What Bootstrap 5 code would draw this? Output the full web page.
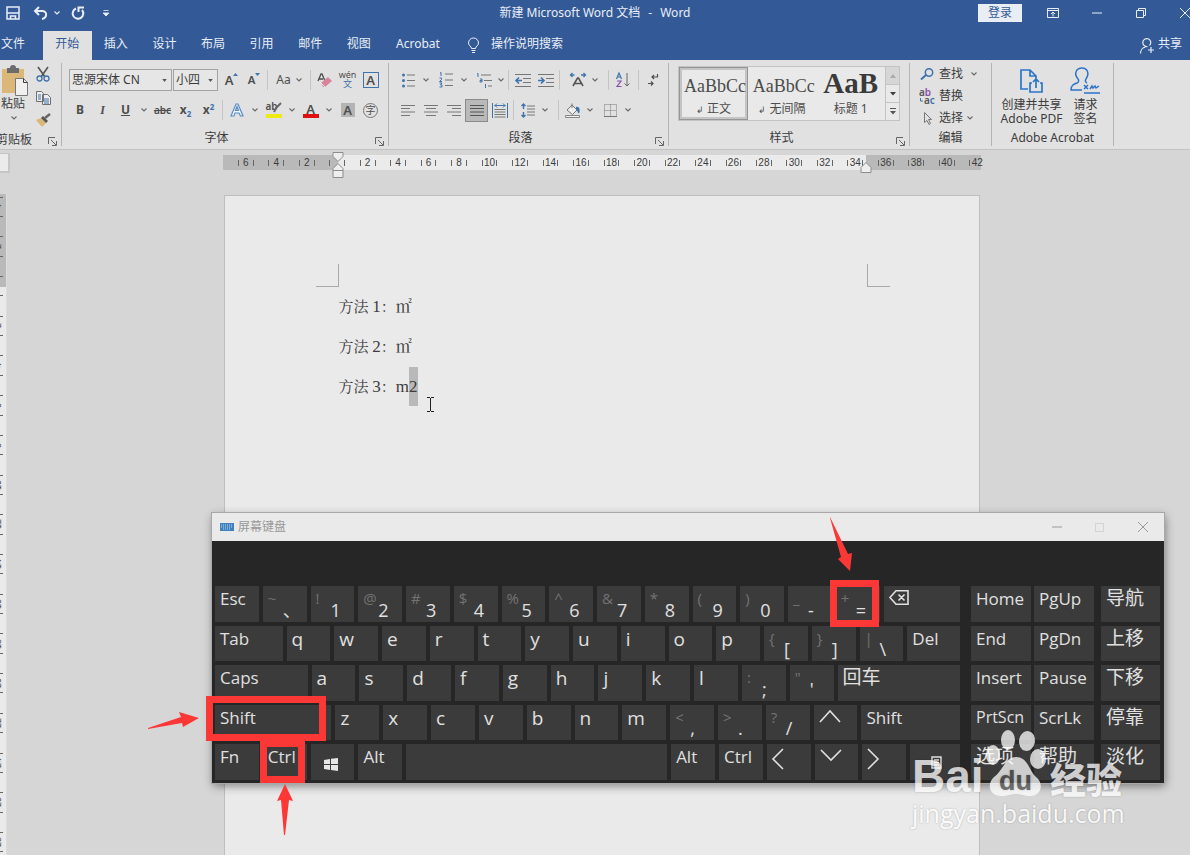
<!DOCTYPE html>
<html lang="zh-CN">
<head>
<meta charset="utf-8">
<meta name="viewport" content="width=device-width, initial-scale=1">
<title>新建 Microsoft Word 文档 - Word</title>
<link href="https://cdn.jsdelivr.net/npm/bootstrap@5.3.0/dist/css/bootstrap.min.css" rel="stylesheet">
<style>
:root{--blue:#335a96;--ribbon:#e1e1e1;--desk:#d6d6d6;--paper:#eaeaea;--ink:#3c3c3c;--accent:#3f73ac}
body{font-family:"Noto Sans","Noto Sans CJK SC",sans-serif;font-size:12px;line-height:16px;color:var(--ink);background:var(--desk)}
button{border:0;background:none;padding:0;color:inherit;font:inherit}
svg{display:block;flex:none;overflow:visible}
.ln{fill:none;stroke:currentColor}
/* title bar and tabs */
.top-band{background:var(--blue);color:#e9eef6;flex:none}
.title-row{display:grid;grid-template-columns:1fr auto 1fr;height:26px}
.qat{padding-left:6px}
.qat button,.win-btn{height:26px;display:flex;align-items:center;justify-content:center}
.q-s{width:14px;margin-right:6px}.q-m{width:28px}.q-c{width:6px}
.login{width:44px;height:18px;background:#e9edf4;color:var(--blue);margin-right:9px}
.win-btn{width:44px}
.win-btn.edge{width:27px;justify-content:flex-end}
.tab-row{height:34px;padding-top:5px}
.tab-row a{color:inherit;text-decoration:none;line-height:26px;height:29px;text-align:center}
.tab-file{width:43px;padding-right:17px}
.tab-set{width:340px}
.tab-set a{flex:1 1 0}
.tab-row a.on{background:var(--ribbon);color:var(--blue)}
.tab-acro{width:70px}
.tell{padding-left:15px}
/* ribbon */
.ribbon{background:var(--ribbon);height:90px;flex:none;border-bottom:1px solid #c2c2c2;overflow:hidden}
.grp{position:relative;display:flex;flex-direction:column;flex:none;margin:3px 0;border-right:1px solid #b4b4b4;height:83px}
.grp-name{margin-top:auto;text-align:center;line-height:16px;height:16px;white-space:nowrap}
.launch{position:absolute;right:4px;bottom:0}
.g-clip{width:62px}.g-font{width:327px;padding-left:7px}.g-para{width:280px;padding-left:8px}.g-style{width:241px;padding-left:9px}.g-edit{width:82px}.g-acro{width:122px}
.trow{display:flex;align-items:center;height:24px}
.trow:first-child{margin-top:5px}
.trow+.trow{margin-top:6px}
.t{display:flex;align-items:center;justify-content:center;flex:none;height:23px;width:23px;color:#4e4e4e}
.t.c{width:14px}.t.n{width:11px}.t.w{width:38px;gap:5px}.t.s{width:22px}
.t.sel{background:#b9b9b9;box-shadow:inset 0 0 0 1px #8b8b8b}
.dn{color:#6a6a6a}
.bar{width:1px;height:20px;background:#c4c4c4;margin:0 2px;flex:none}
.combo{height:22px;border:1px solid #a3a3a3;border-radius:0;background:#e6e6e6 url("data:image/svg+xml,%3Csvg xmlns='http://www.w3.org/2000/svg' viewBox='0 0 6 4'%3E%3Cpath d='M0 0h6L3 4z' fill='%23555'/%3E%3C/svg%3E") no-repeat right 4px center/5px 3px;appearance:none;padding:0 2px;color:var(--ink);font-size:12px;line-height:18px}
.combo.f1{width:103px}.combo.f2{width:45px;margin-left:1px;margin-right:2px}
.fs{font-size:13px;font-weight:600;line-height:16px}
.acc{color:var(--accent)}
.gallery{display:flex;margin-top:3px;height:55px;width:222px;border:1px solid #c3c3c3;background:#e9e9e9}
.sty{flex:1 1 0;overflow:hidden;min-width:0;text-align:center;padding:3px 5px 0;color:#4c4c4c}
.sty b,.sty i{display:block;font:normal 18px/26px "Liberation Serif",serif;height:28px;white-space:nowrap}
.sty b{font-weight:700;font-size:29px;line-height:20px;color:#3a3a3a}
.sty.on{box-shadow:inset 0 0 0 1px #969696,inset 0 0 0 3px #c4c4c4}
.sty span{display:block;line-height:16px}
.sty small{font-size:9px}
.gal-nav{width:14px;border-left:1px solid #c3c3c3}
.gal-nav button{flex:1;display:flex;align-items:center;justify-content:center;border-bottom:1px solid #c3c3c3}
.gal-nav button:last-child{border:0}
.gal-nav button:first-child{background:#d6d6d6;color:#aaa}
.erow{display:flex;align-items:center;height:22px;gap:4px;padding-left:10px}
.erow svg.ic{width:15px}
.big{text-align:center;line-height:14px}
/* workspace */
.work{position:relative;overflow:hidden;min-height:0;flex:1 1 0}
.v-col{width:7px;flex:none}
.tab-kind{width:10px;height:20px;margin-top:3px;background:#ebebeb;border:1px solid #c6c6c6;border-left:0;border-width:1px 2px 2px 0}
.v-rule{margin-top:21px;background:linear-gradient(#b9b9b9 93px,#eaeaea 93px);height:661px;overflow:hidden;border-right:1px solid #dcdcdc}
.v-cells{display:grid;grid-template-rows:repeat(17,1fr);height:675px;margin-top:-7px}
.v-cells div{position:relative;display:flex;align-items:center;font:9px/9px "Liberation Sans",sans-serif;background:linear-gradient(#666,#666) 0 25%/3px 1px no-repeat,linear-gradient(#666,#666) 0 75%/3px 1px no-repeat}
.v-cells span{writing-mode:vertical-rl;rotate:180deg;margin-left:-6px}
.canvas{padding-left:6px}
.sheet-col{width:758px;margin:0 auto}
.h-rule{margin-top:5px;height:15px;padding-left:8px;position:relative;background:linear-gradient(90deg,#b9b9b9 115px,#ebebeb 115px,#ebebeb 643px,#b9b9b9 643px)}
.h-cells{display:grid;grid-template-columns:repeat(25,1fr);width:762px}
.h-cells div{text-align:center;font:10px/15px "Liberation Sans",sans-serif;height:15px;background:linear-gradient(#666,#666) 25% 50%/1px 6px no-repeat,linear-gradient(#666,#666) 75% 50%/1px 6px no-repeat}
.h-cells div:last-child{background-size:1px 6px,0 0}
.mk{position:absolute;top:-3px}
.mk-l{left:109px}.mk-r{left:637px}
.sheet{margin:25px 1px 0 1px;background:var(--paper);border:1px solid #bebebe;border-bottom:0;height:680px;padding:68px 89px 0 91px}
.corner{width:23px;height:23px;border:solid #a9a9a9;border-width:0 1px 1px 0}
.corner.r{border-width:0 0 1px 1px}
.copy{padding-left:23px;font:15px/40px "Liberation Serif","Noto Serif CJK SC","Noto Sans CJK SC",serif}
.copy p{margin:0;height:40px}
.copy .num{font-size:17px}
.copy .unit{font-size:16px}
.copy .hit{background:#b9b9b9;display:inline-block;height:39px}
.beam{position:absolute;left:427px;top:247px}
/* on-screen keyboard */
.osk{position:absolute;left:212px;right:26px;top:363px;box-shadow:0 0 0 1px #a8a8a8,1px 3px 9px rgba(0,0,0,.45)}
.osk-bar{height:28px;background:var(--paper);color:#999;padding-left:8px}
.osk-bar button{width:43px;height:26px;display:flex;align-items:center;justify-content:center}
.osk-body{background:#262626;padding:45px 4px 3px 3px;display:flex}
.keys{display:grid;grid-auto-rows:1fr;gap:4px;height:194px}
.k-main{flex:745 1 0;margin-right:11px}.k-nav{flex:123 1 0;margin-right:7px}.k-side{flex:59 1 0}
.krow{display:flex;gap:4px;min-width:0}
.k-nav .krow{gap:3px}
.key{position:relative;min-width:0;background:#3b3b3b;color:#e0e0e0;text-align:left;font:17px/25px "Open Sans","Noto Sans CJK SC",sans-serif;padding:0 0 0 5px;display:flex;align-items:flex-start;white-space:nowrap}
.key.big-l{font-size:19px;line-height:26px}
.key.cj{font-size:19px}
.key.sm{font-size:16px}
.key sub,.key sup{position:absolute;line-height:20px;top:2px;left:5px;font-size:15px;color:#737373}
.key sub{top:auto;bottom:2px;left:20px;font-size:18px;color:#e0e0e0}
.key svg{margin:4px 0 0 0}
.notes{position:absolute;left:0;top:0;pointer-events:none}
/* watermark */
.wm{position:absolute;left:912px;top:577px;color:#fff;pointer-events:none;text-shadow:0 0 2px rgba(0,0,0,.3)}
.wm-top{display:flex;align-items:flex-end;height:69px;opacity:.75}
.wm-top b{font:700 46px/40px "Liberation Sans",sans-serif;width:68px}
.wm-top strong{font:900 36px/36px "Noto Sans CJK SC",sans-serif}
.wm-url{font:25px/30px "Open Sans",sans-serif;opacity:.85;margin-top:2px}
</style>
</head>
<body class="vh-100 overflow-hidden d-flex flex-column">
<svg width="0" height="0" class="position-absolute">
  <symbol id="dn" viewBox="0 0 6 4"><path d="M.5.5 3 3 5.500.5" fill="none" stroke="currentColor" stroke-width="1.100"/></symbol>
  <symbol id="tri" viewBox="0 0 6 4"><path d="M0 0h6L3 3.500z" fill="currentColor"/></symbol>
  <symbol id="ln" viewBox="0 0 9 9"><path d="M.5 7V.5H7M3 3l5 5M8.500 4v4.500H4" fill="none" stroke="#666"/></symbol>
</svg>

<header class="top-band">
  <div class="title-row">
    <div class="qat d-flex">
      <button class="q-s" aria-label="保存"><svg width="14" height="14" class="ln" stroke-width="1.500"><path d="M1 1h12v12H1zM1 7h12M4.500 13v-3h5v3"/></svg></button>
      <button class="q-m" aria-label="撤消"><svg width="15" height="14" class="ln" stroke-width="2"><path d="M6 1 2 5l4 4M2 5h7c6 0 5 7 0 8"/></svg></button>
      <button class="q-c" aria-label="撤消选项"><svg width="6" height="4"><use href="#dn"/></svg></button>
      <button class="q-m ms-1" aria-label="恢复"><svg width="14" height="14" class="ln" stroke-width="2"><path d="M5 2.500a5.300 5.300 0 1 0 6 1.500M7.500 6V1.500H13"/></svg></button>
      <button class="q-m" aria-label="自定义"><svg width="6" height="7"><path d="M.5.5h5M0 3h6L3 6z" fill="currentColor" stroke="currentColor" stroke-width=".8"/></svg></button>
    </div>
    <div class="d-flex align-items-center gap-2"><span>新建 Microsoft Word 文档</span><span>-</span><span>Word</span></div>
    <div class="d-flex justify-content-end align-items-center">
      <button class="login">登录</button>
      <button class="win-btn" aria-label="功能区选项"><svg width="12" height="10" class="ln"><path d="M.5.5h11v9H.5zM.5 2.500h11M6 8.500V4.500M4 6l2-2 2 2"/></svg></button>
      <button class="win-btn" aria-label="最小化"><svg width="10" height="2" class="ln"><path d="M0 1h10"/></svg></button>
      <button class="win-btn" aria-label="还原"><svg width="10" height="10" class="ln"><path d="M.5 2.500h7v7h-7zM2.500 2.500v-2h7v7h-2"/></svg></button>
      <button class="win-btn edge" aria-label="关闭"><svg width="10" height="10" class="ln"><path d="m0 0 10 10M10 0 0 10"/></svg></button>
    </div>
  </div>
  <nav class="tab-row d-flex">
    <a class="tab-file" href="#">文件</a>
    <div class="tab-set d-flex"><a class="on" href="#">开始</a><a href="#">插入</a><a href="#">设计</a><a href="#">布局</a><a href="#">引用</a><a href="#">邮件</a><a href="#">视图</a></div>
    <a class="tab-acro" href="#">Acrobat</a>
    <a class="tell d-flex align-items-center" href="#"><svg width="11" height="15" class="ln me-2"><path d="M3.500 10.500C3.500 8 .5 8 .5 5a5 5 0 0 1 10 0c0 3-3 3-3 5.500zM3.500 12.500h4M4 14.500h3"/></svg><span class="mb-1 ps-1">操作说明搜索</span></a>
    <a class="ms-auto d-flex align-items-center pe-2 me-n1" href="#"><svg width="14" height="16" class="ln me-1"><path d="M7.500 8.500a4 4 0 1 1 2-1M.5 15.500c0-3 2-6 5-6.500M11 9v6M8 12h6" stroke-width="1.200"/></svg><span class="mb-1">共享</span></a>
  </nav>
</header>

<section class="ribbon d-flex" aria-label="功能区">
  <div class="grp g-clip">
    <div class="d-flex">
      <button class="text-center align-self-start" style="width:28px"><svg width="28" height="33"><path d="M2 6h22v24H2z" fill="#dcb878"/><path d="M7 5h3a3 3 0 0 1 6 0h3v5H7z" fill="#6c6c6c"/><path d="M15.500 15.500h8l4 4v13h-12z" fill="#f0f0f0" stroke="#777"/><path d="M23.500 15.500v4h4" class="ln" stroke="#777"/></svg><span class="d-block" style="margin-left:-2px">粘贴</span><svg class="mx-auto mt-1 dn" width="6" height="4"><use href="#dn"/></svg></button>
      <div class="d-flex flex-column align-items-center ps-1">
        <button class="t s" aria-label="剪切"><svg width="14" height="15" class="ln"><path d="m2 0 7 10M12 0 5 10" stroke="#555" stroke-width="1.600"/><circle cx="3.500" cy="11.500" r="2.500" stroke="#3f73ac" stroke-width="1.300"/><circle cx="10.500" cy="11.500" r="2.500" stroke="#3f73ac" stroke-width="1.300"/></svg></button>
        <button class="t s" aria-label="复制"><svg width="15" height="14" fill="#ececec" stroke="#707070"><path d="M.5.5h5l2 2v8h-7zM6.500 3.500h5l3 3v7h-8z"/><path d="M2 4h3M2 6h3M2 8h3M8 8h5M8 10h5M8 12h5" stroke="#3f73ac"/></svg></button>
        <button class="t s" aria-label="格式刷"><svg width="15" height="13"><path d="M0 6 5 4l5 5-4 4z" fill="#dcb878"/><path d="M5 4l2-2 5 5-2 2z" fill="#555"/><path d="m9 4 5-4" stroke="#666" stroke-width="2.500"/></svg></button>
      </div>
    </div>
    <div class="grp-name text-start" style="margin-left:-4px">剪贴板</div>
    <svg class="launch" width="9" height="9"><use href="#ln"/></svg>
  </div>

  <div class="grp g-font">
    <div class="trow">
      <select class="combo f1" aria-label="字体"><option>思源宋体 CN</option></select>
      <select class="combo f2" aria-label="字号"><option>小四</option></select>
      <button class="t fs">A<svg class="acc align-self-start mt-1" width="5" height="3"><path d="M0 3h5L2.500 0z" fill="currentColor"/></svg></button>
      <button class="t s fs"><small>A</small><svg class="acc align-self-start mt-1" width="5" height="3"><path d="M0 0h5L2.500 3z" fill="currentColor"/></svg></button>
      <span class="bar"></span>
      <button class="t w">Aa<svg class="dn" width="6" height="4"><use href="#dn"/></svg></button>
      <span class="bar"></span>
      <button class="t" aria-label="清除格式"><svg width="15" height="15"><path d="M1 8 4 1h1l3 7M2 6h4" class="ln" stroke-width="1.300"/><path d="m4 10 7-6 4 4-7 6H6z" fill="#d9849a"/><path d="m4 10 4 4" stroke="#e8e8e8"/></svg></button>
      <button class="t" aria-label="拼音指南"><span class="d-block" style="font-size:9px;line-height:8px">wén<span class="d-block acc" style="line-height:10px">文</span></span></button>
      <button class="t"><span style="border:1px solid #3f73ac;width:16px;height:16px;line-height:14px;font-size:13px;font-weight:600">A</span></button>
    </div>
    <div class="trow">
      <button class="t s fw-bold">B</button><button class="t"><i class="fw-bold" style="font-family:'Liberation Serif'">I</i></button><button class="t fw-bold"><u>U</u></button><button class="t c dn"><svg width="6" height="4"><use href="#dn"/></svg></button>
      <button class="t fw-semibold"><s style="font-size:10px">abc</s></button>
      <button class="t fw-bold">x<span class="acc align-self-end" style="font-size:8px">2</span></button><button class="t fw-bold">x<span class="acc align-self-start" style="font-size:8px">2</span></button>
      <span class="bar"></span>
      <button class="t" aria-label="文本效果"><svg width="14" height="14" fill="#f2f6fb" stroke="#5b8cc4" stroke-width="1.200"><path d="M1 13 6 1h2l5 12h-2.500L9 10H5l-1 3zM5.500 7.500h3L7 3.500z"/></svg></button><button class="t c dn"><svg width="6" height="4"><use href="#dn"/></svg></button>
      <button class="t" aria-label="突出显示"><span class="position-relative d-block fw-semibold" style="font-size:10px;line-height:9px;border-bottom:4px solid #ecec14;width:16px;height:16px;text-align:left">ab<svg class="position-absolute" style="left:7px;top:1px" width="9" height="10"><path d="m1 9 2-4 5-5" stroke="#666" stroke-width="2" fill="none"/></svg></span></button><button class="t c dn"><svg width="6" height="4"><use href="#dn"/></svg></button>
      <button class="t"><span class="d-block fw-semibold" style="font-size:13px;line-height:12px;border-bottom:4px solid #e01010;width:16px;height:15px">A</span></button><button class="t c dn"><svg width="6" height="4"><use href="#dn"/></svg></button>
      <button class="t"><span class="fw-semibold" style="font-size:13px;line-height:14px;background:#b4b4b4;width:14px">A</span></button>
      <button class="t"><span class="rounded-circle" style="font-size:10px;line-height:13px;border:1px solid #777;width:15px;height:15px">字</span></button>
    </div>
    <div class="grp-name" style="margin-left:-24px">字体</div>
    <svg class="launch" width="9" height="9"><use href="#ln"/></svg>
  </div>

  <div class="grp g-para">
    <div class="trow">
      <button class="t" aria-label="项目符号"><svg width="13" height="15"><path d="M5 2h8M5 7.500h8M5 13h8" stroke="#777"/><g fill="#3f73ac"><circle cx="1.500" cy="2" r="1.500"/><circle cx="1.500" cy="7.500" r="1.500"/><circle cx="1.500" cy="13" r="1.500"/></g></svg></button><button class="t n dn"><svg width="6" height="4"><use href="#dn"/></svg></button>
      <button class="t ms-1" aria-label="编号"><svg width="15" height="16"><path d="M6 2h8M6 8h8M6 13.500h8" stroke="#777"/><path d="M1 1l1-.500V4M.5 6h2v1.500l-2 2h2.500M.5 11h2.500L1.500 13H3v2H.5" stroke="#3f73ac" fill="none"/></svg></button><button class="t n dn"><svg width="6" height="4"><use href="#dn"/></svg></button>
      <button class="t s ms-1" aria-label="多级列表"><svg width="16" height="15"><path d="M5 2h10M8 7.500h8M12 13h4" stroke="#777"/><path d="M1 1l1-.500V4M4 6h2v3H4V7.500h2M9.500 11v4" stroke="#3f73ac" fill="none"/></svg></button><button class="t n dn"><svg width="6" height="4"><use href="#dn"/></svg></button>
      <span class="bar"></span>
      <button class="t" aria-label="减少缩进"><svg width="16" height="13"><path d="M0 .5h16M8 4.500h8M8 8.500h8M0 12.500h16" stroke="#777"/><path d="M1 6.500h6M4 3.500l-3 3 3 3" stroke="#3f73ac" fill="none" stroke-width="1.600"/></svg></button>
      <button class="t" aria-label="增加缩进"><svg width="16" height="13"><path d="M0 .5h16M8 4.500h8M8 8.500h8M0 12.500h16" stroke="#777"/><path d="M0 6.500h6M3 3.500l3 3-3 3" stroke="#3f73ac" fill="none" stroke-width="1.600"/></svg></button>
      <span class="bar"></span>
      <button class="t ms-1" aria-label="中文版式"><svg width="16" height="14"><path d="m3 13 4.500-8h1L13 13M5 10.500h6" stroke="#555" stroke-width="1.600" fill="none"/><path d="M4.500 2h-4M2.500 0l-2 2 2 2M11 2h4.500M13.500 0l2 2-2 2" stroke="#3f73ac" fill="none" stroke-width="1.300"/></svg></button><button class="t n dn"><svg width="6" height="4"><use href="#dn"/></svg></button>
      <span class="bar ms-2"></span>
      <button class="t" aria-label="排序"><svg width="14" height="16" fill="none"><path d="m.5 7 2.500-6 2.500 6M1.500 5h3" stroke="#3f73ac" stroke-width="1.200"/><path d="M1 9h4l-4 5.500h4.500" stroke="#8a50a8" stroke-width="1.200"/><path d="M11 1v13M8.500 11.500l2.500 2.500 2.500-2.500" stroke="#666"/></svg></button>
      <span class="bar ms-1"></span>
      <button class="t" aria-label="显示编辑标记"><svg width="10" height="13" class="ln" stroke-width="1.200"><path d="M9.500 0v3H4M6 1 4 3l2 2M0 9.500h5M3 7.500l2 2-2 2"/></svg></button>
    </div>
    <div class="trow">
      <button class="t s" aria-label="左对齐"><svg width="14" height="11"><path d="M0 .5h14M0 3.500h9M0 7h14M0 10.500h9" stroke="#777"/></svg></button>
      <button class="t" aria-label="居中"><svg width="14" height="11"><path d="M0 .5h14M2 3.500h10M0 7h14M2 10.500h10" stroke="#777"/></svg></button>
      <button class="t" aria-label="右对齐"><svg width="14" height="11"><path d="M0 .5h14M5 3.500h9M0 7h14M5 10.500h9" stroke="#777"/></svg></button>
      <button class="t sel" aria-label="两端对齐"><svg width="14" height="11"><path d="M0 .5h14M0 3.500h14M0 7h14M0 10.500h14" stroke="#555"/></svg></button>
      <button class="t" aria-label="分散对齐"><svg width="16" height="15"><path d="M.5 0v15M15.500 0v15M2.500 2.500h11M5 .5l-2 2 2 2M11 .5l2 2-2 2" stroke="#3f73ac" fill="none"/><path d="M2.500 6.500h11M2.500 9h11M2.500 11.500h11M2.500 14h11" stroke="#777"/></svg></button>
      <span class="bar"></span>
      <button class="t" aria-label="行距"><svg width="14" height="15"><path d="M6 3h8M6 6h8M6 9h8M6 12h8" stroke="#777"/><path d="M2.500 1v5M2.500 9v5M.5 3l2-2 2 2M.5 12l2 2 2-2" stroke="#3f73ac" fill="none" stroke-width="1.400"/></svg></button><button class="t n dn"><svg width="6" height="4"><use href="#dn"/></svg></button>
      <span class="bar ms-2"></span>
      <button class="t" aria-label="底纹"><svg width="16" height="15"><path d="m2 7 5-5 5 5-4.500 4.500z" fill="#eee" stroke="#777"/><path d="M7 5V.5" stroke="#777" fill="none"/><path d="M11 4c4-1 4.500 4 3 6.500-1 0-1.500-3-3-4z" fill="#3f73ac"/><path d="M.5 12.500h14v2H.5z" fill="#eee" stroke="#888"/></svg></button><button class="t n dn"><svg width="6" height="4"><use href="#dn"/></svg></button>
      <button class="t ms-1" aria-label="边框"><svg width="13" height="13"><path d="M.5.5h12v12H.5zM6.500.5v12M.5 6.500h12" stroke="#777" fill="none" stroke-dasharray="1 1"/><path d="M0 12.500h13" stroke="#777"/></svg></button><button class="t n dn"><svg width="6" height="4"><use href="#dn"/></svg></button>
    </div>
    <div class="grp-name pe-4">段落</div>
    <svg class="launch" width="9" height="9"><use href="#ln"/></svg>
  </div>

  <div class="grp g-style">
    <div class="gallery">
      <button class="sty on"><i>AaBbCc</i><span><small>↲</small> 正文</span></button>
      <button class="sty"><i>AaBbCc</i><span><small>↲</small> 无间隔</span></button>
      <button class="sty"><b>AaB</b><span>标题 1</span></button>
      <div class="gal-nav d-flex flex-column"><button aria-label="上"><svg width="6" height="4"><path d="M0 4h6L3 0z" fill="currentColor"/></svg></button><button aria-label="下"><svg width="6" height="4"><use href="#tri"/></svg></button><button aria-label="更多"><svg width="6" height="7"><path d="M0 .5h6" stroke="#555"/><path d="M0 3h6L3 6.500z" fill="#555"/></svg></button></div>
    </div>
    <div class="grp-name pe-4">样式</div>
    <svg class="launch" width="9" height="9"><use href="#ln"/></svg>
  </div>

  <div class="grp g-edit">
    <button class="erow"><svg class="ic" height="12" fill="none" stroke="#3f73ac" stroke-width="1.500"><circle cx="9" cy="4.500" r="3.700"/><path d="m6 7-5 4.500" stroke-width="2"/></svg>查找<svg class="ms-1 dn" width="6" height="4"><use href="#dn"/></svg></button>
    <button class="erow"><svg class="ic" height="15" font-family="Noto Sans" font-weight="600" font-size="10"><text x="-1" y="7" fill="#555">a<tspan fill="#8a50a8">b</tspan></text><text x="4" y="15" fill="#555">a<tspan fill="#3f73ac">c</tspan></text><path d="M.5 9v3H3" stroke="#3f73ac" fill="none"/></svg>替换</button>
    <button class="erow"><svg class="ic" height="13" fill="none" stroke="#777"><path d="M4.500.5v10l2.500-2 2 4 1.500-1-2-4h3z"/></svg>选择<svg class="dn" width="6" height="4"><use href="#dn"/></svg></button>
    <div class="grp-name">编辑</div>
  </div>

  <div class="grp g-acro">
    <div class="d-flex justify-content-center pe-1" style="gap:8px">
      <button class="big"><svg class="mx-auto mt-1" width="23" height="27" fill="none" stroke="#2b75c9" stroke-width="1.700"><path d="M8 22H1V3h9l6 6v3M10 3v6h6M12 16h-2v9h12v-9h-2M16 21V12M13 15l3-3 3 3"/></svg><span class="d-block mt-1">创建并共享</span><span class="d-block">Adobe PDF</span></button>
      <button class="big"><svg class="mx-auto mt-1" width="30" height="27" fill="none" stroke="#2b75c9" stroke-width="1.500"><path d="M12 23H1c0-5 3-6 6-7 2-1 2-3 1-4-5-6-1-11 4-11s8 5 4 11c-1 1-1 3 1 4M14 18l4 4M18 18l-4 4M20 22l2-3 1 2 2-2 1 2 3-2M14 26h16"/></svg><span class="d-block mt-1">请求</span><span class="d-block">签名</span></button>
    </div>
    <div class="grp-name">Adobe Acrobat</div>
  </div>
</section>

<main class="work d-flex">
  <div class="v-col"><div class="tab-kind"></div><div class="v-rule"><div class="v-cells" id="vCells"></div></div></div>
  <div class="canvas flex-grow-1">
    <div class="sheet-col">
      <div class="h-rule">
        <div class="h-cells" id="hCells"></div>
        <svg class="mk mk-l" width="12" height="27" fill="#eee" stroke="#8c8c8c"><path d="M1 .5h10v4L6 9.500l-5-5zM6 11.500l5 5v9H1v-9zM1 18.500h10"/></svg>
        <svg class="mk mk-r" width="12" height="27" fill="#eee" stroke="#8c8c8c"><path d="m6 10.500 5 5v5H1v-5z"/></svg>
      </div>
      <article class="sheet">
        <div class="d-flex justify-content-between"><div class="corner"></div><div class="corner r"></div></div>
        <div class="copy">
          <p>方法 <span class="num">1</span>：<span class="unit">㎡</span></p>
          <p>方法 <span class="num">2</span>：<span class="unit">㎡</span></p>
          <p>方法 <span class="num">3</span>：<span class="num">m</span><span class="num hit">2</span></p>
        </div>
      </article>
    </div>
  </div>
  <svg class="beam" width="7" height="15" fill="none" stroke="#222"><path d="M0 .5h3M4 .5h3M3.500 1v13M0 14.500h3M4 14.500h3"/></svg>

  <section class="osk" aria-label="屏幕键盘">
    <div class="osk-bar d-flex align-items-center">
      <svg width="14" height="8"><path d="M0 0h14v8H0z" fill="#3f82bd"/><path d="M1 2h12M1 4h12M3 6h8" stroke="#b8d4ea" stroke-dasharray="1 1"/></svg>
      <span class="ms-1">屏幕键盘</span>
      <div class="ms-auto d-flex">
        <button aria-label="最小化"><svg width="10" height="2" class="ln"><path d="M0 1h10"/></svg></button>
        <button aria-label="最大化" disabled><svg width="9" height="9" fill="none" stroke="#d3d3d3"><path d="M.5.5h8v8h-8z"/></svg></button>
        <button aria-label="关闭"><svg width="10" height="10" class="ln"><path d="m0 0 10 10M10 0 0 10"/></svg></button>
      </div>
    </div>
    <div class="osk-body">
      <div class="keys k-main" id="kMain"></div>
      <div class="keys k-nav" id="kNav"></div>
      <div class="keys k-side" id="kSide"></div>
    </div>
    <svg class="notes" width="10" height="10"><g transform="translate(-212 -513)"><g fill="none" stroke="#fb3836" stroke-width="7"><path d="M209.500 699.500h113v38h-113z"/><path d="M263.500 743.500h38v36h-38z"/><path d="M833.500 583.500h42v40h-42z"/></g><g fill="#fb3836"><path d="m285 784 8 17-4-1-4 35h-1l-3-35-4 1z"/><path d="m199 718-16 9-1-4-34 6v-1l33-11-2-5z"/><path d="m850 571-12-12 3-2-11-39v-1l18 37 4-1z"/></g></g></svg>
  </section>

  <div class="wm">
    <div class="wm-top"><b>Bai</b><svg class="ms-2" width="54" height="67" fill="#fff"><ellipse cx="5" cy="26" rx="7" ry="10"/><ellipse cx="20" cy="11" rx="7" ry="10"/><ellipse cx="39" cy="12" rx="8" ry="10" transform="rotate(10 39 12)"/><ellipse cx="50" cy="30" rx="8" ry="10"/><path d="M28 28c12 0 13 14 20 20 8 6 6 19-6 19-6 0-8-2-14-2s-8 2-14 2C0 67-1 54 6 48c9-6 11-20 22-20z"/><text x="11" y="61" font-family="Liberation Sans" font-weight="700" font-size="27" fill="#555">du</text></svg><strong class="ps-2">经验</strong></div>
    <div class="wm-url">jingyan.baidu.com</div>
  </div>
</main>

<script>
const hNums=[6,4,2,''];for(let n=2;n<=42;n+=2)hNums.push(n);
document.getElementById('hCells').innerHTML=hNums.map(n=>`<div>${n}</div>`).join('');
const vNums=[4,2,''];for(let n=2;n<=28;n+=2)vNums.push(n);
document.getElementById('vCells').innerHTML=vNums.map(n=>`<div><span>${n}</span></div>`).join('');

const svg=(w,h,d,sw=1.6)=>`<svg width="${w}" height="${h}" fill="none" stroke="#e0e0e0" stroke-width="${sw}"><path d="${d}"/></svg>`;
const art={
  bksp:svg(20,15,'M7 .8h12v13.400H7L1 7.500zM9.500 4.500l6 6M15.500 4.500l-6 6'),
  up:svg(22,14,'M1 13 11 2l10 11'),dnk:svg(22,14,'M1 2l10 10L21 2'),
  lt:svg(12,22,'M11 1 1 11l10 10'),rt:svg(12,22,'M1 1l10 10L1 21'),
  win:'<svg width="14" height="13" fill="#e6e6e6" class="align-self-center ms-2 mt-1"><path d="M0 2l6-1v5H0zM7 .8 14 0v6H7zM0 7h6v5l-6-1zM7 7h7v6l-7-1z"/></svg>',
  menu:'<svg width="11" height="13" fill="none" stroke="#e0e0e0" class="align-self-center ms-3 mt-0" stroke-width="1.400"><path d="M1 1h9v11H1zM3 4h5M3 6.500h5M3 9h5"/></svg>'
};
/* a key is [label, width share, style]; a label "x y" has a shifted and a plain sign */
const key=([t,w=44,c=''])=>{
  let inner=art[t]||(t.includes(' ')?`<sup>${t.split(' ')[0]}</sup><sub>${t.split(' ')[1]}</sub>`:t);
  return `<button class="key ${c}" style="flex:${w} 1 ${w}px">${inner}</button>`};
const row=a=>`<div class="krow">${a.map(key).join('')}</div>`;
const L=s=>[...s].map(c=>[c,44,'big-l']);
const two=a=>a.map(s=>[s]);
document.getElementById('kMain').innerHTML=[
  [['Esc'],...two(['~ 、','! 1','@ 2','# 3','$ 4','% 5','^ 6','&amp; 7','* 8','( 9',') 0','_ -','+ =']),['bksp',77]],
  [['Tab',68],...L('qwertyuiop'),...two(['{ [','} ]','| \\']),['Del',53]],
  [['Caps',93],...L('asdfghjkl'),...two([': ;','" \'']),['回车',123,'cj']],
  [['Shift',117],...L('zxcvbnm'),...two(['&lt; ,','&gt; .','? /']),['up'],['Shift',99]],
  [['Fn'],['Ctrl'],['win'],['Alt'],['',262],['Alt'],['Ctrl'],['lt'],['dnk'],['rt'],['menu',50]]
].map(row).join('');
document.getElementById('kNav').innerHTML=[
  [['Home',60],['PgUp',60]],[['End',60],['PgDn',60]],[['Insert',60],['Pause',60]],[['PrtScn',60,'sm'],['ScrLk',60]],[['选项',60,'cj'],['帮助',60,'cj']]
].map(row).join('');
document.getElementById('kSide').innerHTML=['导航','上移','下移','停靠','淡化'].map(s=>row([[s,59,'cj']])).join('');
</script>
<script src="https://cdn.jsdelivr.net/npm/bootstrap@5.3.0/dist/js/bootstrap.bundle.min.js"></script>
</body>
</html>
